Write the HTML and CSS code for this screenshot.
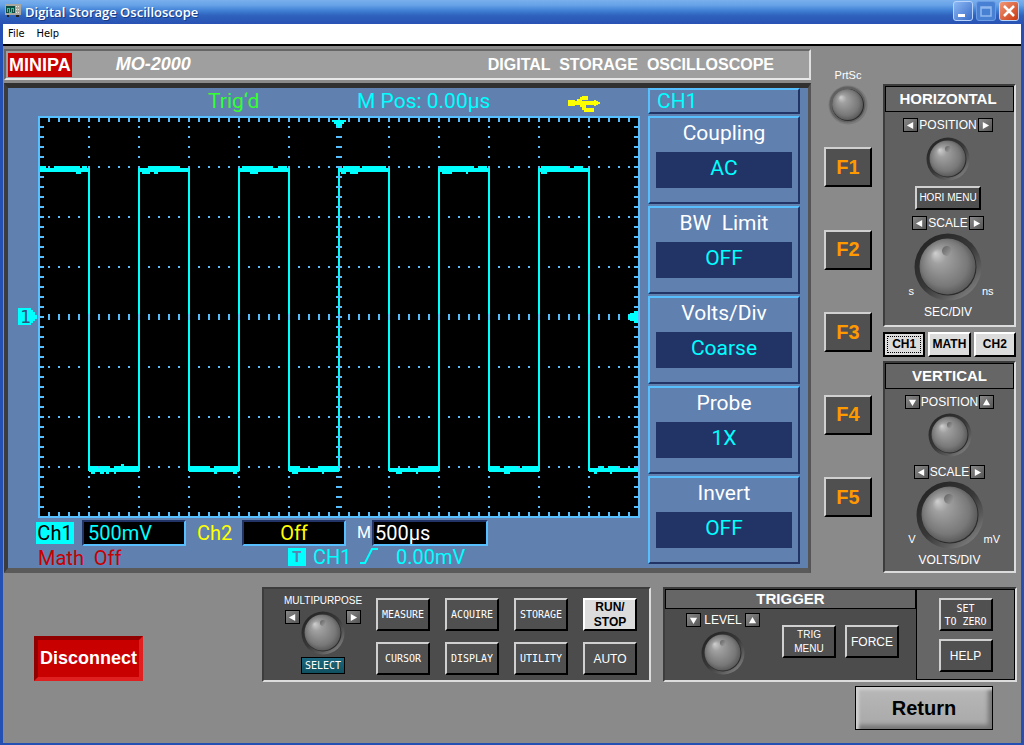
FILE: index.html
```html
<!DOCTYPE html>
<html lang="en">
<head>
<meta charset="utf-8">
<title>Digital Storage Oscilloscope</title>
<link rel="stylesheet" href="styles.css">
</head>
<body>
<svg class="defs" aria-hidden="true">
  <defs>
    <linearGradient id="ring" x1="0.15" y1="0.1" x2="0.85" y2="0.9">
      <stop offset="0" stop-color="#262626"/><stop offset="0.5" stop-color="#383838"/><stop offset="0.8" stop-color="#5c5c5c"/><stop offset="1" stop-color="#7c7c7c"/>
    </linearGradient>
    <radialGradient id="ball" cx="0.5" cy="0.5" r="0.55" fx="0.28" fy="0.26">
      <stop offset="0" stop-color="#d0d0d0"/><stop offset="0.25" stop-color="#a0a0a0"/><stop offset="0.75" stop-color="#787878"/><stop offset="1" stop-color="#505050"/>
    </radialGradient>
    <linearGradient id="dimple" x1="0" y1="0" x2="1" y2="1">
      <stop offset="0" stop-color="#606060"/><stop offset="1" stop-color="#a4a4a4"/>
    </linearGradient>
    <symbol id="knob" viewBox="0 0 44 44">
      <circle cx="22" cy="22" r="21.5" fill="url(#ring)"/>
      <circle cx="22" cy="22" r="18.5" fill="#2c2c2c"/>
      <circle cx="21.5" cy="21.5" r="18" fill="url(#ball)"/>
      <circle cx="22" cy="12" r="3" fill="url(#dimple)"/>
    </symbol>
    <symbol id="knob-large" viewBox="0 0 68 68">
      <circle cx="34" cy="34" r="33.5" fill="url(#ring)"/>
      <circle cx="34" cy="34" r="28.5" fill="#2c2c2c"/>
      <circle cx="33.5" cy="33.5" r="28" fill="url(#ball)"/>
      <circle cx="33" cy="18" r="5" fill="url(#dimple)"/>
    </symbol>
    <symbol id="push" viewBox="0 0 40 40">
      <circle cx="20" cy="20" r="19.5" fill="#7a7a7a"/>
      <circle cx="19.500" cy="19.500" r="18" fill="#606060"/>
      <circle cx="20" cy="20" r="16" fill="#2c2c2c"/>
      <circle cx="19.500" cy="19.500" r="15.500" fill="url(#ball)"/>
    </symbol>
    <symbol id="tri-left" viewBox="0 0 10 10"><path d="M8 1V9L1 5Z" fill="#fff"/></symbol>
    <symbol id="tri-right" viewBox="0 0 10 10"><path d="M2 1V9L9 5Z" fill="#fff"/></symbol>
    <symbol id="tri-up" viewBox="0 0 10 10"><path d="M1 8H9L5 1Z" fill="#fff"/></symbol>
    <symbol id="tri-down" viewBox="0 0 10 10"><path d="M1 2H9L5 9Z" fill="#fff"/></symbol>
    <pattern id="dots-x" x="0" y="0" width="10" height="50" patternUnits="userSpaceOnUse">
      <rect x="0" y="0" width="2" height="2" fill="#58bfff"/>
    </pattern>
    <pattern id="dots-y" x="0" y="0" width="50" height="10" patternUnits="userSpaceOnUse">
      <rect x="0" y="0" width="2" height="2" fill="#58bfff"/>
    </pattern>
  </defs>
</svg>

<div class="window">
  <header class="titlebar">
    <svg class="app-icon" viewBox="0 0 16 13" shape-rendering="crispEdges" aria-hidden="true">
      <rect x="0" y="0" width="16" height="11" fill="#a8a8a0"/><rect x="1" y="2" width="9" height="7" fill="#0a4a40"/>
      <path d="M2 8V4H4V8H6V4H8V8" fill="none" stroke="#2fc49a"/>
      <path d="M11 2H15M11 5H15M11 8H15" stroke="#e8e8e0" stroke-dasharray="1 1"/><path d="M2 12H4M11 12H14" stroke="#222" stroke-width="2"/>
    </svg>
    <h1>Digital Storage Oscilloscope</h1>
    <div class="window-buttons">
      <button type="button" aria-label="Minimize"><svg viewBox="0 0 18 18"><path d="M4 13.500H11" stroke="#fff" stroke-width="3"/></svg></button>
      <button type="button" class="dim" aria-label="Maximize"><svg viewBox="0 0 18 18"><path d="M4 5H14V14H4ZM4 6H14" fill="none" stroke="#90b8ee" stroke-width="1.500"/></svg></button>
      <button type="button" class="close" aria-label="Close"><svg viewBox="0 0 18 18"><path d="M4 4L14 14M14 4L4 14" stroke="#fff" stroke-width="2.500"/></svg></button>
    </div>
  </header>
  <nav class="menubar"><button type="button">File</button><button type="button">Help</button></nav>

  <main>
    <section class="upper">
      <div class="instrument">
        <div class="nameplate">
          <strong class="brand">MINIPA</strong>
          <em>MO-2000</em>
          <span>DIGITAL  STORAGE  OSCILLOSCOPE</span>
        </div>
        <div class="screen">
          <div class="display">
            <div class="status">
              <span class="green">Trig‘d</span>
              <span>M Pos: 0.00µs</span>
              <svg viewBox="0 0 32 16" shape-rendering="crispEdges" role="img" aria-label="USB">
                <path d="M0 4H7V5H9V3H12V1H14V0H20V4H14V5H26V4H28V5H30V6H32V8H30V9H28V10H26V9H18V12H26V16H16V14H14V11H12V9H7V10H0Z" fill="#ff0"/>
              </svg>
            </div>
            <svg class="plot" viewBox="0 0 602 402" shape-rendering="crispEdges" role="img" aria-label="Square wave on channel 1">
              <rect x="1" y="1" width="600" height="400" fill="#000" stroke="#58bfff" stroke-width="2"/>
              <svg x="10" y="50" width="584" height="302" viewBox="0 0 584 302"><rect width="584" height="302" fill="url(#dots-x)"/></svg>
              <svg x="50" y="10" width="502" height="386" viewBox="0 0 502 386"><rect width="502" height="386" fill="url(#dots-y)"/></svg>
              <g fill="none" stroke="#58bfff" stroke-width="4" stroke-dasharray="2 8">
                <path d="M10 4H600M10 398H600M4 10V400M598 10V400"/>
              </g>
              <path d="M2 53H51V354H101V53H151V354H201V53H251V354H301V53H351V354H401V53H451V354H501V53H551V354H600" fill="none" stroke="#0ff" stroke-width="2"/>
              <g fill="none" stroke="#58bfff" stroke-width="6" stroke-dasharray="2 8">
                <path d="M10 201H598M301 10V398"/>
              </g>
              <path d="M2 54H51M101 54H151M201 54H251M301 54H351M401 54H451M501 54H551M51 354H101M151 354H201M251 354H301M351 354H401M451 354H501M551 354H600" stroke="#0ff" stroke-width="4"/>
              <path d="M2 51H8M16 51H42M44 51H49M110 51H142M204 51H235M240 51H249M305 51H321M324 51H348M401 51H436M440 51H449M503 51H530M536 51H545M51 351H60M62 351H72M83 349H86M76 351H101M151 351H172M176 351H200M251 351H262M280 351H300M381 351H401M451 351H461M466 351H480M484 351H501M562 351H566M570 351H580" stroke="#0ff" stroke-width="2"/>
              <path d="M38 57H43M104 57H112M116 57H120M212 57H220M303 57H308M312 57H320M404 57H414M428 57H430M503 57H509M53 357H57M62 357H66M68 357H71M76 357H78M176 357H179M195 357H199M254 357H260M284 357H286M358 357H364M378 357H380M466 357H472M556 357H559M572 357H574" stroke="#0ff" stroke-width="2"/>
              <path d="M294 4H308V6H306V8H304V10H302V12H300V10H298V8H296V6H294ZM600 195V207H596V205H592V203H590V199H592V197H596V195Z" fill="#0ff"/>
              <path d="M-20 192H-7V194H-5V196H-3V199H-1V203H-3V205H-5V207H-7V209H-20Z" fill="#0ff"/>
              <text x="-18" y="207" class="channel-mark">1</text>
            </svg>
            <div class="readouts">
              <b class="tag">Ch1</b><span class="field cyan">500mV</span>
              <span class="yellow name">Ch2</span><span class="field yellow mid">Off</span>
              <span class="white name">M</span><span class="field white wide">500µs</span>
            </div>
            <div class="trigger-line">
              <span class="red">Math&nbsp; Off</span>
              <b class="t-mark">T</b><span>CH1</span>
              <svg viewBox="0 0 18 16" role="img" aria-label="Rising edge"><path d="M0 15H5L12 1H18" fill="none" stroke="#0ff" stroke-width="2"/></svg>
              <span>0.00mV</span>
            </div>
          </div>
          <div class="softmenu">
            <div class="heading">CH1</div>
            <dl>
              <div><dt>Coupling</dt><dd>AC</dd></div>
              <div><dt>BW&nbsp; Limit</dt><dd>OFF</dd></div>
              <div><dt>Volts/Div</dt><dd>Coarse</dd></div>
              <div><dt>Probe</dt><dd>1X</dd></div>
              <div><dt>Invert</dt><dd>OFF</dd></div>
            </dl>
          </div>
        </div>
      </div>

      <div class="softkeys">
        <label for="prtsc">PrtSc</label>
        <button type="button" id="prtsc" class="knob push"><svg><use href="#push"/></svg></button>
        <div class="keys">
          <button type="button" class="key">F1</button>
          <button type="button" class="key">F2</button>
          <button type="button" class="key">F3</button>
          <button type="button" class="key">F4</button>
          <button type="button" class="key">F5</button>
        </div>
      </div>

      <div class="controls">
        <section class="panel horizontal">
          <h2>HORIZONTAL</h2>
          <div class="stepper"><button type="button" aria-label="Position left"><svg><use href="#tri-left"/></svg></button><span>POSITION</span><button type="button" aria-label="Position right"><svg><use href="#tri-right"/></svg></button></div>
          <button type="button" class="knob" aria-label="Horizontal position"><svg><use href="#knob"/></svg></button>
          <button type="button" class="key small hori">HORI MENU</button>
          <div class="stepper"><button type="button" aria-label="Scale down"><svg><use href="#tri-left"/></svg></button><span>SCALE</span><button type="button" aria-label="Scale up"><svg><use href="#tri-right"/></svg></button></div>
          <div class="dial"><span>s</span><button type="button" class="knob large" aria-label="Seconds per division"><svg><use href="#knob-large"/></svg></button><span>ns</span></div>
          <p>SEC/DIV</p>
        </section>
        <div class="channels">
          <button type="button" class="key light selected">CH1</button>
          <button type="button" class="key light">MATH</button>
          <button type="button" class="key light">CH2</button>
        </div>
        <section class="panel vertical">
          <h2>VERTICAL</h2>
          <div class="stepper"><button type="button" aria-label="Position down"><svg><use href="#tri-down"/></svg></button><span>POSITION</span><button type="button" aria-label="Position up"><svg><use href="#tri-up"/></svg></button></div>
          <button type="button" class="knob" aria-label="Vertical position"><svg><use href="#knob"/></svg></button>
          <div class="stepper"><button type="button" aria-label="Scale down"><svg><use href="#tri-left"/></svg></button><span>SCALE</span><button type="button" aria-label="Scale up"><svg><use href="#tri-right"/></svg></button></div>
          <div class="dial"><span>V</span><button type="button" class="knob large" aria-label="Volts per division"><svg><use href="#knob-large"/></svg></button><span>mV</span></div>
          <p>VOLTS/DIV</p>
        </section>
      </div>
    </section>

    <section class="lower">
      <button type="button" class="disconnect">Disconnect</button>
      <div class="panel multi">
        <div class="multipurpose">
          <span>MULTIPURPOSE</span>
          <div class="turner">
            <button type="button" class="arrow" aria-label="Previous"><svg><use href="#tri-left"/></svg></button>
            <button type="button" class="knob" aria-label="Multipurpose"><svg><use href="#knob"/></svg></button>
            <button type="button" class="arrow" aria-label="Next"><svg><use href="#tri-right"/></svg></button>
          </div>
          <button type="button" class="select">SELECT</button>
        </div>
        <div class="functions">
          <button type="button" class="key narrow">MEASURE</button>
          <button type="button" class="key narrow">ACQUIRE</button>
          <button type="button" class="key narrow">STORAGE</button>
          <button type="button" class="key light">RUN/<br>STOP</button>
          <button type="button" class="key narrow">CURSOR</button>
          <button type="button" class="key narrow">DISPLAY</button>
          <button type="button" class="key narrow">UTILITY</button>
          <button type="button" class="key plain">AUTO</button>
        </div>
      </div>
      <div class="panel trigger">
        <div class="trigger-main">
          <h2>TRIGGER</h2>
          <div class="trigger-body">
            <div class="level">
              <div class="stepper"><button type="button" aria-label="Level down"><svg><use href="#tri-down"/></svg></button><span>LEVEL</span><button type="button" aria-label="Level up"><svg><use href="#tri-up"/></svg></button></div>
              <button type="button" class="knob" aria-label="Trigger level"><svg><use href="#knob"/></svg></button>
            </div>
            <button type="button" class="key small">TRIG<br>MENU</button>
            <button type="button" class="key plain">FORCE</button>
          </div>
        </div>
        <div class="side">
          <button type="button" class="key narrow">SET<br>TO ZERO</button>
          <button type="button" class="key plain">HELP</button>
        </div>
      </div>
    </section>
    <footer><button type="button" class="return">Return</button></footer>
  </main>
</div>
</body>
</html>
```
FILE: styles.css
```css
* { box-sizing: border-box; }
body { margin: 0; font-family: "Liberation Sans", Arial, sans-serif; font-size: 12px; color: #fff; }
button { font: inherit; color: inherit; padding: 0; margin: 0; border: 0; background: none; }
svg { display: block; }
h1, h2, p, dl, dd { margin: 0; }
.defs { position: absolute; width: 0; height: 0; }

/* Window frame */
.window { min-height: 100vh; display: flex; flex-direction: column; background: #8a8a8a; border: solid #2450b4; border-width: 0 3px 2px; }
.titlebar { display: flex; align-items: center; height: 24px; margin: 0 -3px; padding: 0 5px; background: linear-gradient(#7ab0ec, #68a4e8 20%, #3f7fd4 45%, #2f62bc 65%, #2852b4); }
.app-icon { width: 16px; height: 13px; margin-bottom: 4px; }
.titlebar h1 { flex: 1; margin-left: 4px; font: 600 13px/20px "Open Sans", "Noto Sans", sans-serif; text-shadow: 1px 1px #1a3c84; }
.window-buttons { display: flex; gap: 3px; margin-bottom: 3px; }
.window-buttons button { width: 20px; height: 20px; border: 1px solid #b8d4fa; border-radius: 3px; background: linear-gradient(135deg, #8cb8f4, #3a6cc8); }
.window-buttons .dim { border-color: #6c9ce4; background: #4880d4; }
.window-buttons .close { background: linear-gradient(135deg, #f09878, #c83810); }
.menubar { display: flex; gap: 12px; height: 22px; padding: 1px 5px 2px; background: #fff; border-bottom: 2px solid #000; color: #000; font: 11px/16px "DejaVu Sans Condensed", "Noto Sans", sans-serif; }

main { flex: 1; padding: 3px 5px 0 1px; }
.upper { display: grid; grid-template-columns: minmax(0, 1fr) 61px 144px; }

.nameplate { display: flex; align-items: center; height: 31px; padding: 0 35px 0 2px; background: #9f9f9f; border: 2px solid; border-color: #666 #e0e0e0 #e8e8e8 #666; font-weight: bold; }
.nameplate .brand { padding: 0 1px; line-height: 24px; background: #c80000; font-size: 18px; }
.nameplate em { flex: 1; margin-left: 44px; font-size: 18px; }
.nameplate span { font-size: 16px; white-space: pre; }

/* Scope display */
.screen { display: flex; margin-top: 3px; padding-right: 8px; background: #6080b0; border: solid; border-width: 5px 3px 5px 4px; border-color: #303030 #555 #5a5a5a #3c3c3c; font: 21px/24px Roboto, sans-serif; color: #0ff; }
.display { flex: 1; min-width: 0; padding: 0 8px 0 30px; }
.status { display: grid; grid-template-columns: 149px 211px 32px; height: 28px; padding-left: 170px; line-height: 26px; }
.status svg { width: 32px; height: 16px; margin-top: 8px; }
.green { color: #3f3; }
.plot { width: 100%; height: auto; overflow: visible; }
.channel-mark { font: 18px "DejaVu Sans Mono", monospace; fill: #305080; }
.readouts { display: flex; align-items: center; height: 28px; margin-left: -2px; padding-top: 2px; font-size: 20px; }
.tag { width: 38px; margin-right: 8px; text-align: center; line-height: 22px; background: #0ff; color: #000; font-weight: normal; }
.field { width: 104px; height: 26px; padding-left: 4px; line-height: 22px; background: #000; border: 2px solid; border-color: #223366 #58bfff #58bfff #223366; }
.field.mid { padding: 0; text-align: center; }
.field.wide { width: 116px; padding-left: 1px; }
.name { margin: 0 9px 0 11px; }
.name.white { width: 15px; margin: 0 0 0 11px; font-size: 16px; }
.name.yellow { width: 36px; }
.yellow { color: #ff0; }
.white { color: #fff; }
.red { color: #c80000; }
.trigger-line { display: grid; grid-template-columns: 250px 25px 47px 36px 1fr; height: 22px; font-size: 20px; line-height: 22px; }
.trigger-line .red { line-height: 25px; }
.trigger-line svg { width: 18px; height: 16px; margin-top: 2px; }
.t-mark { width: 18px; height: 18px; margin-top: 2px; background: #0ff; color: #6080b0; font-size: 15px; line-height: 18px; text-align: center; }

.softmenu { width: 152px; }
.heading, .softmenu dl > div { border: 2px solid; border-color: #58bfff #223366 #223366 #58bfff; }
.heading { height: 26px; padding-left: 7px; line-height: 23px; }
.softmenu dl { display: grid; gap: 2px; margin-top: 2px; }
.softmenu dl > div { height: 88px; padding: 4px 6px; text-align: center; }
.softmenu dt { height: 30px; line-height: 22px; color: #fff; }
.softmenu dd { height: 36px; background: #223366; line-height: 33px; }

/* Keys and knobs */
.key { width: 54px; height: 33px; background: #505050; border: 2px solid; border-color: #d0d0d0 #000 #000 #d0d0d0; }
.key.small { font-size: 10px; line-height: 14px; }
.key.plain { font-size: 12px; }
.key.narrow, .select { font: 10px/13px "DejaVu Sans Mono", monospace; }
.key.light { background: #dcdcdc; border-color: #fff #000 #000 #fff; color: #000; font-weight: bold; line-height: 15px; }
.knob { display: block; width: 44px; height: 44px; border-radius: 50%; }
.knob svg { width: 100%; height: 100%; }
.knob.large { width: 68px; height: 68px; }
.knob.push { width: 40px; height: 40px; margin: 4px 0 22px; }
.softkeys { display: flex; flex-direction: column; align-items: center; margin-left: 13px; padding-top: 20px; font-size: 11px; }
.keys { flex: 1; display: flex; flex-direction: column; justify-content: space-between; margin-bottom: 56px; }
.keys .key { width: 48px; height: 40px; color: #ff9900; font-size: 20px; font-weight: bold; }
.stepper { display: flex; align-items: center; justify-content: center; gap: 1px; height: 14px; margin-top: 6px; }
.stepper button, .arrow { display: grid; place-items: center; width: 15px; height: 14px; border: 1px solid #000; background: linear-gradient(135deg, #888, #555); }
.stepper svg, .arrow svg { width: 9px; height: 9px; }

/* Right-hand panels */
.controls { display: flex; flex-direction: column; margin-left: 11px; padding-top: 35px; }
.panel { background: #606060; border: 2px solid; border-color: #3c3c3c #dcdcdc #dcdcdc #3c3c3c; }
.panel h2 { align-self: stretch; border: 1px solid #000; background: #666; font-size: 15px; line-height: 24px; text-align: center; }
.horizontal, .vertical { display: flex; flex-direction: column; align-items: center; }
.horizontal { height: 243px; }
.horizontal > :not(h2) { margin-right: 3px; }
.horizontal h2 { padding-right: 3px; }
.vertical { height: 212px; }
.horizontal > .knob { margin-top: 5px; }
.horizontal .hori { width: 66px; height: 24px; margin-top: 5px; white-space: nowrap; }
.dial { display: grid; grid-template-columns: 1fr 68px 1fr; align-self: stretch; align-items: end; margin-top: 3px; font-size: 11px; }
.dial span { margin-bottom: 4px; }
.dial span:first-child { text-align: right; }
.horizontal p, .vertical p { margin-top: 4px; line-height: 14px; }
.vertical .stepper { margin-top: 6px; }
.vertical > .knob { margin-top: 4px; }
.vertical .knob + .stepper { margin-top: 8px; }
.vertical .dial { margin-top: 2px; }
.channels { display: grid; grid-template-columns: repeat(3, 1fr); gap: 3px; margin: 5px 0 4px; }
.channels .key { width: auto; height: 25px; }
.channels .selected { border: 2px solid #000; outline: 1px dotted #000; outline-offset: -5px; }

/* Bottom row */
.lower { display: grid; grid-template-columns: 258px minmax(0, 389fr) 12px minmax(0, 353fr); margin-top: 14px; }
.disconnect { width: 109px; height: 45px; margin: 49px 0 0 30px; background: #c80000; border: 4px solid; border-color: #900000 #e02020 #e02020 #900000; font-size: 18px; font-weight: bold; }
.multi { display: flex; height: 95px; background: #4c4c4c; }
.multipurpose { width: 118px; margin-right: -6px; display: flex; flex-direction: column; align-items: center; padding-top: 6px; font-size: 10px; line-height: 12px; }
.turner { display: flex; margin-top: 1px; }
.arrow { margin-top: 2px; }
.turner .knob { margin: 3px 1px 0; }
.select { width: 44px; height: 17px; margin-top: 2px; border: 1px solid #000; background: linear-gradient(#1c6880, #105060); }
.functions { flex: 1; display: grid; grid-template-columns: repeat(4, 54px); justify-content: space-between; align-content: space-between; padding: 9px 12px 5px 0; }
.trigger { grid-column: 4; display: flex; margin-right: -1px; background: #4c4c4c; }
.trigger-main { flex: 1; }
.trigger h2 { line-height: 18px; }
.trigger-body { display: flex; justify-content: flex-end; padding-right: 17px; }
.trigger-body > .key { margin: 16px 0 0 9px; }
.trigger-body > .small { margin-left: 22px; }
.level { width: 74px; display: flex; flex-direction: column; align-items: center; }
.level .stepper { gap: 3px; margin-top: 4px; }
.level .knob { margin-top: 4px; }
.side { width: 99px; display: flex; flex-direction: column; align-items: center; gap: 8px; padding-top: 8px; background: #666; border: 1px solid #000; }
footer { display: flex; justify-content: flex-end; padding: 4px 23px 0 0; }
.return { width: 138px; height: 44px; border: 1px solid #000; background: linear-gradient(#b8b8b8, #a8a8a8); box-shadow: inset 3px 3px 3px #d0d0d0, inset -4px -4px 4px #777; color: #000; font-size: 20px; font-weight: bold; }
```
